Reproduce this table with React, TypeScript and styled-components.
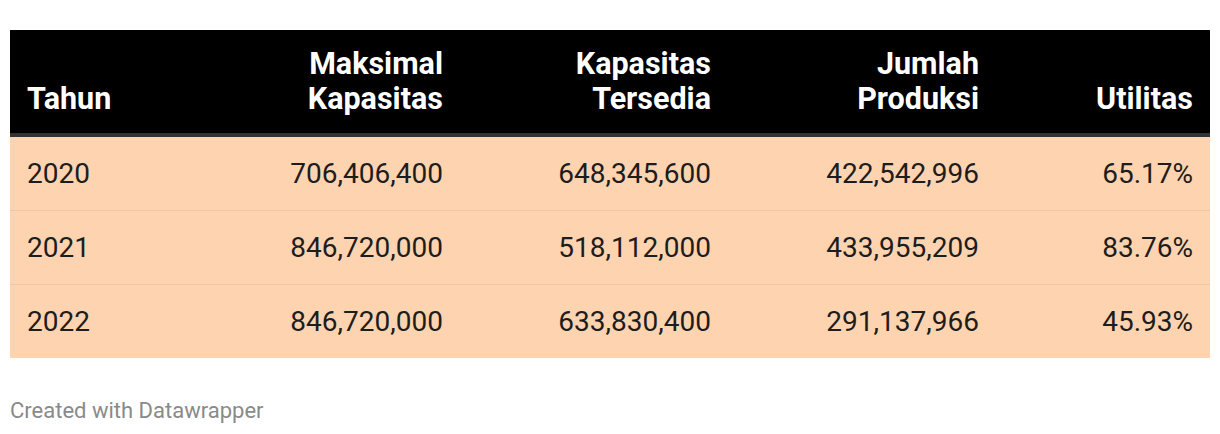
import React from "react";
import styled, { createGlobalStyle } from "styled-components";

const Global = createGlobalStyle`
  html, body { margin: 0; padding: 0; background: #ffffff; }
  body { font-family: Roboto, "Liberation Sans", sans-serif; }
`;

const Page = styled.div`
  padding: 30px 10px 0 10px;
`;

const Table = styled.table`
  width: 1200px;
  border-collapse: collapse;
  table-layout: fixed;
  font-family: Roboto, "Liberation Sans", sans-serif;
  font-size: 28px;
  line-height: 35px;
`;

const HeadRow = styled.tr`
  background: #000000;
  border-bottom: 4px solid #333333;
`;

const Th = styled.th<{ $align: "left" | "right" }>`
  color: #ffffff;
  font-size: 30.5px;
  font-weight: 700;
  text-align: ${(p) => p.$align};
  vertical-align: bottom;
  padding: 16px 17px 17px 17px;
`;

const Row = styled.tr<{ $last?: boolean }>`
  background: #fed3b0;
  border-bottom: ${(p) => (p.$last ? "none" : "1px solid #f1c6a4")};
`;

const Td = styled.td<{ $align: "left" | "right" }>`
  color: #1d1d1d;
  font-weight: 400;
  text-align: ${(p) => p.$align};
  vertical-align: middle;
  padding: 19px 17px;
`;

const Footer = styled.div`
  margin-top: 40px;
  font-family: Roboto, "Liberation Sans", sans-serif;
  font-size: 22px;
  line-height: 26px;
  color: #8a8a8a;
`;

const cols: { label: React.ReactNode; width: number; align: "left" | "right" }[] = [
  { label: "Tahun", width: 182, align: "left" },
  { label: <>Maksimal<br />Kapasitas</>, width: 268, align: "right" },
  { label: <>Kapasitas<br />Tersedia</>, width: 268, align: "right" },
  { label: <>Jumlah<br />Produksi</>, width: 268, align: "right" },
  { label: "Utilitas", width: 214, align: "right" },
];

const rows = [
  ["2020", "706,406,400", "648,345,600", "422,542,996", "65.17%"],
  ["2021", "846,720,000", "518,112,000", "433,955,209", "83.76%"],
  ["2022", "846,720,000", "633,830,400", "291,137,966", "45.93%"],
];

export default function App() {
  return (
    <Page>
      <Global />
      <Table>
        <colgroup>
          {cols.map((c, i) => (
            <col key={i} style={{ width: c.width }} />
          ))}
        </colgroup>
        <thead>
          <HeadRow>
            {cols.map((c, i) => (
              <Th key={i} $align={c.align}>
                {c.label}
              </Th>
            ))}
          </HeadRow>
        </thead>
        <tbody>
          {rows.map((r, ri) => (
            <Row key={ri} $last={ri === rows.length - 1}>
              {r.map((v, ci) => (
                <Td key={ci} $align={cols[ci].align}>
                  {v}
                </Td>
              ))}
            </Row>
          ))}
        </tbody>
      </Table>
      <Footer>Created with Datawrapper</Footer>
    </Page>
  );
}
